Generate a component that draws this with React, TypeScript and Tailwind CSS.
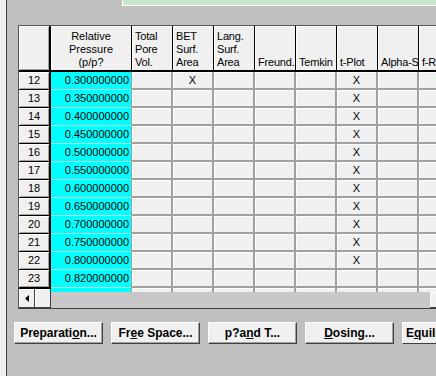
import React from "react";

type Row = { n: number; v: string; bet?: boolean; t?: boolean };

const rows: Row[] = [
  { n: 12, v: "0.300000000", bet: true, t: true },
  { n: 13, v: "0.350000000", t: true },
  { n: 14, v: "0.400000000", t: true },
  { n: 15, v: "0.450000000", t: true },
  { n: 16, v: "0.500000000", t: true },
  { n: 17, v: "0.550000000", t: true },
  { n: 18, v: "0.600000000", t: true },
  { n: 19, v: "0.650000000", t: true },
  { n: 20, v: "0.700000000", t: true },
  { n: 21, v: "0.750000000", t: true },
  { n: 22, v: "0.800000000", t: true },
  { n: 23, v: "0.820000000" },
];

const cols: { key: string; label: string[] }[] = [
  { key: "tpv", label: ["Total", "Pore", "Vol."] },
  { key: "bet", label: ["BET", "Surf.", "Area"] },
  { key: "lang", label: ["Lang.", "Surf.", "Area"] },
  { key: "fr", label: ["Freund."] },
  { key: "tem", label: ["Temkin"] },
  { key: "tpl", label: ["t-Plot"] },
  { key: "alp", label: ["Alpha-S"] },
  { key: "fra", label: ["f-Ratio"] },
];

function DataCell({ mark }: { mark?: boolean }) {
  return (
    <div className="w-[41px] h-full shrink-0 bg-[#f0f0f0] border-r-2 border-b-2 border-[#a0a0a0] shadow-[inset_1px_1px_0_#ffffff] flex items-center justify-center text-[11px] leading-none text-black">
      {mark ? "X" : ""}
    </div>
  );
}

function Btn({ children }: { children: React.ReactNode }) {
  return (
    <div className="w-[89px] h-[22px] shrink-0 bg-[#f0f0f0] border-t border-l border-t-white border-l-white border-r border-b border-r-[#404040] border-b-[#404040] shadow-[inset_-1px_-1px_0_#a0a0a0] flex items-center justify-center text-[12px] font-bold text-black whitespace-nowrap overflow-hidden">
      {children}
    </div>
  );
}

export default function App() {
  return (
    <div
      className="w-[436px] h-[376px] overflow-hidden bg-[#c0c0c0] flex"
      style={{ fontFamily: "'Liberation Sans', Arial, sans-serif" }}
    >
      <div className="w-[7px] shrink-0 h-full bg-[#f0f0f0] border-r border-[#404040]" />
      <div className="flex-1 min-w-0 flex flex-col overflow-hidden">
        <div className="h-[25px] shrink-0">
          <div className="ml-[115px] h-[6px] bg-[#c7e5c9] border-b border-l border-white" />
        </div>

        {/* grid */}
        <div className="ml-[11px] w-[460px] shrink-0 flex flex-col border-l border-t border-[#555555]">
          {/* header */}
          <div className="flex h-[46px] border-b-2 border-black">
            <div className="w-[32px] shrink-0 bg-[#f0f0f0] border-r-2 border-black shadow-[inset_1px_1px_0_#ffffff,inset_-1px_-1px_0_#a0a0a0]" />
            <div className="w-[81px] shrink-0 bg-[#f0f0f0] border-r border-black shadow-[inset_1px_1px_0_#ffffff] flex flex-col justify-end items-center text-[11px] leading-[13px] text-black pb-[1px]">
              <div>Relative</div>
              <div>Pressure</div>
              <div>(p/p?</div>
            </div>
            {cols.map((c) => (
              <div
                key={c.key}
                className="w-[41px] shrink-0 bg-[#f0f0f0] border-r border-black shadow-[inset_1px_1px_0_#ffffff] flex flex-col justify-end pl-[3px] text-[11px] leading-[13px] tracking-[-0.2px] text-black pb-[1px] overflow-hidden whitespace-nowrap"
              >
                {c.label.map((l, i) => (
                  <div key={i}>{l}</div>
                ))}
              </div>
            ))}
          </div>

          {/* rows */}
          {rows.map((r) => (
            <div key={r.n} className="flex h-[18px]">
              <div className="w-[32px] shrink-0 bg-[#f0f0f0] border-r-2 border-b border-black shadow-[inset_1px_1px_0_#ffffff,inset_-1px_-1px_0_#a0a0a0] flex items-center justify-center text-[11px] leading-none text-black">
                {r.n}
              </div>
              <div className="w-[81px] shrink-0 bg-[#00ffff] border-r border-b border-r-[#a0a0a0] border-b-[#b8d8d8] flex items-center justify-end pr-[2px] text-[11px] leading-none text-black">
                {r.v}
              </div>
              {cols.map((c) => (
                <DataCell
                  key={c.key}
                  mark={(c.key === "bet" && r.bet) || (c.key === "tpl" && r.t)}
                />
              ))}
            </div>
          ))}

          {/* scrollbar area */}
          <div className="flex h-[20px]">
            <div className="w-[32px] shrink-0 flex flex-col">
              <div className="h-[1px] bg-black" />
              <div className="flex-1 flex">
                <div className="w-[16px] h-full bg-[#f0f0f0] border-r border-b border-[#404040] shadow-[inset_1px_1px_0_#ffffff] flex items-center justify-center">
                  <svg width="4" height="7" viewBox="0 0 4 7">
                    <path d="M4 0 L0 3.5 L4 7 Z" fill="#000" />
                  </svg>
                </div>
                <div className="w-[16px] h-full bg-[#f0f0f0] border-r border-b border-[#404040] shadow-[inset_1px_1px_0_#ffffff]" />
              </div>
            </div>
            <div className="flex-1 flex flex-col">
              <div className="h-[4px] flex overflow-hidden">
                <div className="w-[81px] shrink-0 bg-[#00ffff] border-r border-[#a0a0a0]" />
                {cols.map((c) => (
                  <div
                    key={c.key}
                    className="w-[41px] h-[18px] shrink-0 bg-[#f0f0f0] border-r-2 border-[#a0a0a0] shadow-[inset_1px_1px_0_#ffffff]"
                  />
                ))}
              </div>
              <div className="flex-1 flex">
                <div className="w-[379px] shrink-0 bg-[#c8c8c8]" />
                <div className="w-[16px] shrink-0 bg-[#f0f0f0] border-r border-b border-[#404040] shadow-[inset_1px_1px_0_#ffffff]" />
              </div>
            </div>
          </div>
          <div className="h-[1px] bg-[#404040]" />
        </div>

        {/* buttons */}
        <div className="mt-[13px] ml-[7px] flex gap-[8px]">
          <Btn>
            Preparati<span className="underline">o</span>n...
          </Btn>
          <Btn>
            Fr<span className="underline">e</span>e Space...
          </Btn>
          <Btn>
            p?a<span className="underline">n</span>d T...
          </Btn>
          <Btn>
            <span className="underline">D</span>osing...
          </Btn>
          <div className="w-[89px] h-[22px] shrink-0 bg-[#f0f0f0] border-t border-l border-t-white border-l-white border-r border-b border-r-[#404040] border-b-[#404040] flex items-center pl-[3px] text-[12px] font-bold text-black whitespace-nowrap overflow-hidden">
            E<span className="underline">q</span>uilibration...
          </div>
        </div>
      </div>
    </div>
  );
}
